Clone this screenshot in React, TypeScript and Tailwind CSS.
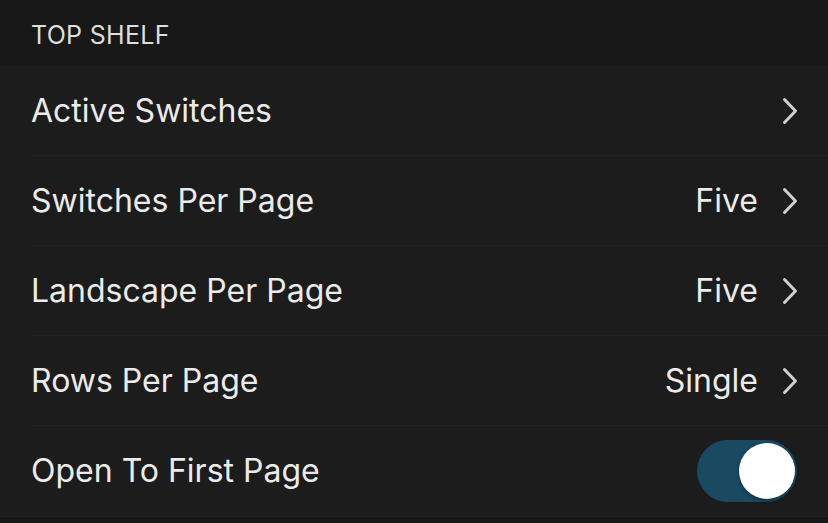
import React from "react";

const Chevron = () => (
  <svg width="16" height="28" viewBox="0 0 16 28" className="shrink-0">
    <path d="M2.5 2.5 L13.5 14 L2.5 25.5" fill="none" stroke="#cfcfcf" strokeWidth="3" strokeLinecap="round" strokeLinejoin="round" />
  </svg>
);

const Row = ({ label, value, last, children }: { label: string; value?: string; last?: boolean; children?: React.ReactNode }) => (
  <div className="relative flex h-[90px] items-center pl-[31px] pr-[30px]">
    <div className="flex-1 text-[32px] text-[#ebebeb] tracking-[0px]">{label}</div>
    {children ?? (
      <div className="flex items-center gap-[24px]">
        {value && <span className="text-[32px] text-[#ebebeb]">{value}</span>}
        <Chevron />
      </div>
    )}
    {!last && <div className="absolute bottom-0 left-[31px] right-0 h-px bg-[#212121]" />}
  </div>
);

export default function App() {
  return (
    <div className="h-[523px] w-[828px] overflow-hidden bg-[#181818]" style={{ fontFamily: "Inter, 'Noto Sans', sans-serif" }}>
      <div className="flex h-[66px] items-center pl-[31px] pt-[6px] text-[25px] tracking-[0.3px] text-[#dedede]">TOP SHELF</div>
      <div className="bg-[#1c1c1c]">
        <Row label="Active Switches" />
        <Row label="Switches Per Page" value="Five" />
        <Row label="Landscape Per Page" value="Five" />
        <Row label="Rows Per Page" value="Single" />
        <Row label="Open To First Page" last>
          <div className="relative mr-[1px] h-[62px] w-[100px] rounded-full bg-[#1a4a62]">
            <div className="absolute right-[2px] top-[3px] h-[56px] w-[56px] rounded-full bg-white shadow-[0_2px_4px_rgba(0,0,0,0.35)]" />
          </div>
        </Row>
      </div>
      <div className="h-px bg-[#222]" />
    </div>
  );
}
